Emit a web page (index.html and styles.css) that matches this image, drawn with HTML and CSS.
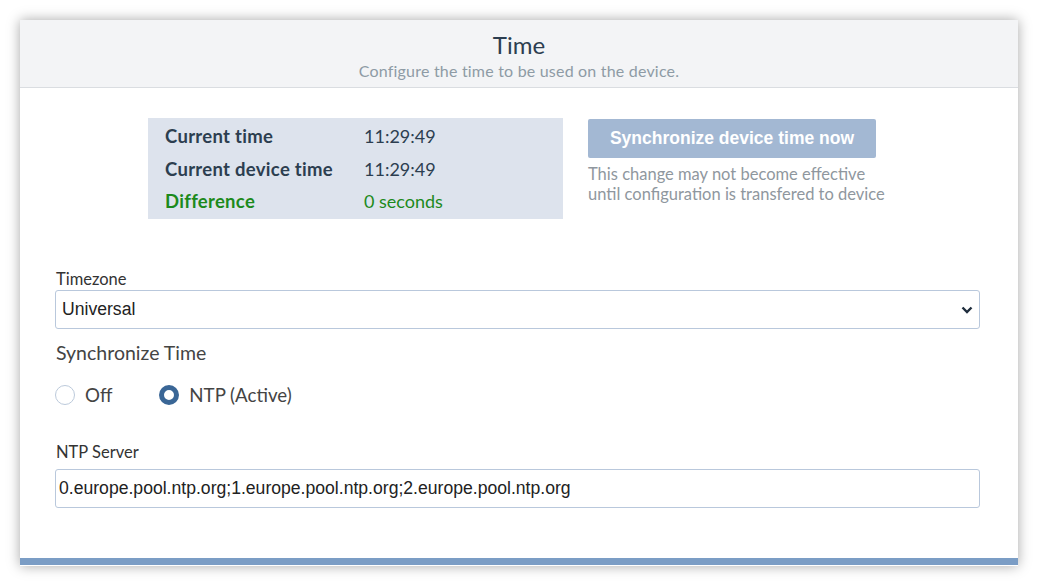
FILE: index.html
```html
<!DOCTYPE html>
<html lang="en">
<head>
    <meta charset="UTF-8">
    <title>Time</title>
    <link rel="stylesheet" href="styles.css">
</head>
<body>
    <div id="wrap">
        <div class="head">
            <h1>Time</h1>
            <p>Configure the time to be used on the device.</p>
        </div>
        <div class="body">
            <div class="status">
                <div class="info">
                    <div class="row"><span class="key">Current time</span><span>11:29:49</span></div>
                    <div class="row"><span class="key">Current device time</span><span>11:29:49</span></div>
                    <div class="row green"><span class="key">Difference</span><span>0 seconds</span></div>
                </div>
                <div class="sync">
                    <button class="btn">Synchronize device time now</button>
                    <p>This change may not become effective<br>until configuration is transfered to device</p>
                </div>
            </div>

            <label class="lbl">Timezone</label>
            <div class="select">
                <span>Universal</span>
                <svg width="12" height="8" viewBox="0 0 12 8"><path d="M1.5 1.5 L6 6 L10.5 1.5" fill="none" stroke="#1f2d3d" stroke-width="2.4"/></svg>
            </div>

            <div class="sub">Synchronize Time</div>
            <div class="radios">
                <div class="radio"><i></i>Off</div>
                <div class="radio on"><i></i>NTP (Active)</div>
            </div>

            <label class="lbl">NTP Server</label>
            <div class="input">0.europe.pool.ntp.org;1.europe.pool.ntp.org;2.europe.pool.ntp.org</div>
        </div>
        <div class="bar"></div>
    </div>
</body>
</html>
```
FILE: styles.css
```css
* {
    margin: 0;
    padding: 0;
    box-sizing: border-box;
}

body {
    background: #fff;
    font-family: Lato, "Open Sans", sans-serif;
    padding: 20px;
}

#wrap {
    width: 998px;
    height: 546px;
    background: #fff;
    box-shadow: 0 0 12px rgba(0, 0, 0, 0.35);
    display: flex;
    flex-direction: column;
}

.head {
    height: 68px;
    background: #f3f4f6;
    border-bottom: 1px solid #dadde1;
    text-align: center;
    padding-top: 12px;
}

.head h1 {
    font-weight: normal;
    font-size: 24px;
    line-height: 26px;
    color: #2c3e50;
}

.head p {
    font-size: 16px;
    letter-spacing: 0.2px;
    line-height: 20px;
    margin-top: 3px;
    color: #8e9ba5;
}

.body {
    flex: 1;
    padding: 30px 38px 0 35px;
}

.status {
    display: flex;
    padding-left: 93px;
    gap: 25px;
}

.info {
    width: 415px;
    height: 101px;
    background: #dde3ed;
    padding: 2px 0 0 17px;
    color: #2c3e50;
    font-size: 18px;
}

.info .row {
    display: flex;
    line-height: 32.5px;
}

.info .key {
    width: 199px;
    font-size: 18.5px;
    letter-spacing: 0.3px;
    font-weight: bold;
}

.info .green {
    color: #1c8a1c;
}

.sync .btn {
    display: block;
    width: 288px;
    height: 39px;
    margin-top: 1px;
    border: none;
    border-radius: 2px;
    background: #a3b8d3;
    color: #fff;
    font-family: "Liberation Sans", Arial, sans-serif;
    font-weight: bold;
    font-size: 17.5px;
}

.sync p {
    color: #8f979e;
    font-size: 16.5px;
    line-height: 20px;
    margin-top: 6px;
}

.lbl {
    display: block;
    font-size: 16.5px;
    line-height: 20px;
    color: #333;
    margin-top: 50px;
    margin-left: 1px;
}

.select, .input {
    height: 39px;
    border: 1px solid #b9c8dc;
    border-radius: 3px;
    display: flex;
    align-items: center;
    font-family: "Liberation Sans", Arial, sans-serif;
    font-size: 17.6px;
    color: #222;
}

.select {
    justify-content: space-between;
    padding: 0 6px 0 6px;
    margin-top: 1px;
}

.input {
    padding-left: 3px;
    margin-top: 7px;
}

.sub {
    font-size: 19.5px;
    line-height: 24px;
    color: #444;
    margin-top: 12px;
    margin-left: 1px;
}

.radios {
    display: flex;
    gap: 47px;
    margin-top: 18px;
}

.radio {
    display: flex;
    align-items: center;
    gap: 10px;
    font-size: 18.7px;
    color: #444;
    line-height: 24px;
}

.radio i {
    width: 20px;
    height: 20px;
    border-radius: 50%;
    border: 1px solid #bccadb;
}

.radio.on i {
    border: 5px solid #3a6696;
}

.radios + .lbl {
    margin-top: 35px;
}

.bar {
    height: 7px;
    background: #7b9dc5;
    margin-bottom: 1px;
}
```
